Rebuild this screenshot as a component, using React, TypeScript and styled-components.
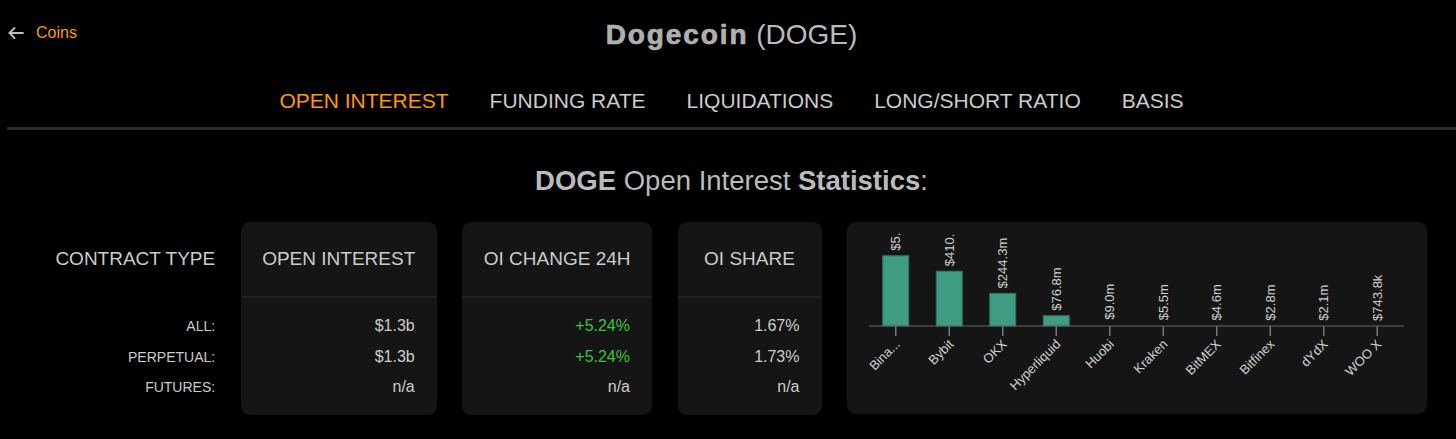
import React from 'react';
import styled, { createGlobalStyle } from 'styled-components';

const GlobalStyle = createGlobalStyle`
	html, body {
		margin: 0;
		padding: 0;
		background: #000;
	}
	body {
		font-family: "Liberation Sans", Arial, sans-serif;
		color: #cccccc;
	}
`;

const tabs = ["OPEN INTEREST", "FUNDING RATE", "LIQUIDATIONS", "LONG/SHORT RATIO", "BASIS"];

const rowLabels = ["ALL:", "PERPETUAL:", "FUTURES:"];

const columns = [
	{ title: "OPEN INTEREST", values: ["$1.3b", "$1.3b", "n/a"], green: [false, false, false] },
	{ title: "OI CHANGE 24H", values: ["+5.24%", "+5.24%", "n/a"], green: [true, true, false] },
	{ title: "OI SHARE", values: ["1.67%", "1.73%", "n/a"], green: [false, false, false] },
];

const exchanges = [
	{ name: "Bina...", value: 526.2, label: "$5." },
	{ name: "Bybit", value: 410.5, label: "$410." },
	{ name: "OKX", value: 244.3, label: "$244.3m" },
	{ name: "Hyperliquid", value: 76.8, label: "$76.8m" },
	{ name: "Huobi", value: 9.0, label: "$9.0m" },
	{ name: "Kraken", value: 5.5, label: "$5.5m" },
	{ name: "BitMEX", value: 4.6, label: "$4.6m" },
	{ name: "Bitfinex", value: 2.8, label: "$2.8m" },
	{ name: "dYdX", value: 2.1, label: "$2.1m" },
	{ name: "WOO X", value: 0.7438, label: "$743.8k" },
];

const CHART_W = 580;
const CHART_H = 192;
const AXIS_Y = 104;
const AXIS_X0 = 22;
const SLOT = 53.5;
const BAR_W = 26;
const SCALE = 0.1335;

const BackArrow = () => (
	<svg width="16" height="12" viewBox="0 0 16 12" fill="none" stroke="#bdbdbd" strokeWidth="1.8" strokeLinecap="round" strokeLinejoin="round">
		<path d="M15 6H1.5" />
		<path d="M6.5 1L1.5 6l5 5" />
	</svg>
);

const ExchangeChart = () => (
	<svg width={CHART_W} height={CHART_H} viewBox={`0 0 ${CHART_W} ${CHART_H}`}>
		<defs>
			<clipPath id="plot">
				<rect x="22" y="11" width={CHART_W - 22} height={CHART_H - 11} />
			</clipPath>
		</defs>
		<g clipPath="url(#plot)">
			{exchanges.map((ex, i) => {
				const cx = AXIS_X0 + SLOT * (i + 0.5);
				const h = ex.value * SCALE;
				const top = AXIS_Y - h;
				return (
					<g key={ex.name}>
						{h > 2 && (
							<rect x={cx - BAR_W / 2} y={top} width={BAR_W} height={h} fill="#3f9b82" stroke="#2c7663" strokeWidth="1" />
						)}
						<text
							x={cx}
							y={top - 5}
							transform={`rotate(-90 ${cx} ${top - 5})`}
							fill="#cfcfcf"
							fontSize="13"
							dominantBaseline="central"
							fontFamily='"Liberation Sans", Arial, sans-serif'
						>
							{ex.label}
						</text>
						<line x1={cx} y1={AXIS_Y} x2={cx} y2={AXIS_Y + 10} stroke="#777" strokeWidth="1.5" />
						<text
							x={cx + 5}
							y={AXIS_Y + 19}
							transform={`rotate(-45 ${cx + 5} ${AXIS_Y + 19})`}
							fill="#cfcfcf"
							fontSize="13"
							textAnchor="end"
							fontFamily='"Liberation Sans", Arial, sans-serif'
						>
							{ex.name}
						</text>
					</g>
				);
			})}
			<line x1={AXIS_X0} y1={AXIS_Y} x2={AXIS_X0 + SLOT * exchanges.length} y2={AXIS_Y} stroke="#666" strokeWidth="1.2" />
		</g>
	</svg>
);

const App = () => {
	return (
		<Page>
			<GlobalStyle />
			<TopBar>
				<BackLink href="#">
					<BackArrow />
					<span>Coins</span>
				</BackLink>
				<Title>
					<strong>Dogecoin</strong> (DOGE)
				</Title>
				<div />
			</TopBar>
			<Tabs>
				{tabs.map((t, i) => (
					<Tab key={t} $active={i === 0}>{t}</Tab>
				))}
			</Tabs>
			<Heading>
				<b>DOGE</b> Open Interest <b>Statistics</b>:
			</Heading>
			<StatsRow>
				<LabelColumn>
					<CardHeader>CONTRACT TYPE</CardHeader>
					<Divider $hidden />
					<Rows>
						{rowLabels.map((l) => (
							<RowLabel key={l}>{l}</RowLabel>
						))}
					</Rows>
				</LabelColumn>
				{columns.map((c) => (
					<Card key={c.title}>
						<CardHeader>{c.title}</CardHeader>
						<Divider />
						<Rows>
							{c.values.map((v, i) => (
								<Value key={i} $green={c.green[i]}>{v}</Value>
							))}
						</Rows>
					</Card>
				))}
				<ChartCard>
					<ExchangeChart />
				</ChartCard>
			</StatsRow>
		</Page>
	);
};

const Page = styled.div`
	padding-left: 7px;
	min-height: 439px;
	box-sizing: border-box;
`;

const TopBar = styled.div`
	display: grid;
	grid-template-columns: 1fr auto 1fr;
	align-items: start;
	padding-top: 19px;
	height: 54px;
	box-sizing: border-box;
`;

const BackLink = styled.a`
	display: flex;
	align-items: center;
	gap: 12px;
	margin-top: 5px;
	padding-left: 1px;
	color: #ff9900;
	text-decoration: none;
	font-size: 16px;
	line-height: 18px;
	justify-self: start;
`;

const Title = styled.h1`
	margin: 0;
	font-size: 28px;
	line-height: 32px;
	font-weight: normal;
	color: #bbbbbb;
	white-space: nowrap;

	strong {
		font-weight: 700;
		letter-spacing: 1.9px;
		-webkit-text-stroke: 0.7px #b0b0b0;
		color: #b0b0b0;
	}
`;

const Tabs = styled.nav`
	display: flex;
	justify-content: center;
	gap: 41px;
	margin-top: 35px;
	padding-bottom: 14px;
	border-bottom: 3px solid #2a2a2a;
`;

const Tab = styled.a<{ $active?: boolean }>`
	font-size: 21px;
	line-height: 24px;
	color: ${(p) => (p.$active ? "#ff9900" : "#cccccc")};
	cursor: pointer;
`;

const Heading = styled.h2`
	margin: 35px 0 0;
	text-align: center;
	font-size: 27.5px;
	line-height: 32px;
	font-weight: normal;
	color: #bbbbbb;

	b {
		font-weight: 700;
	}
`;

const StatsRow = styled.div`
	display: flex;
	justify-content: flex-end;
	align-items: stretch;
	gap: 25.5px;
	margin-top: 25px;
	padding-right: 29px;
`;

const LabelColumn = styled.div`
	display: flex;
	flex-direction: column;
	align-items: flex-end;
	text-align: right;
`;

const Card = styled.div`
	display: flex;
	flex-direction: column;
	min-width: 144px;
	background: #151515;
	border-radius: 9px;
	box-sizing: border-box;
`;

const CardHeader = styled.div`
	height: 74px;
	display: flex;
	align-items: center;
	justify-content: center;
	padding: 0 21.5px;
	font-size: 19px;
	color: #cccccc;
	white-space: nowrap;

	${LabelColumn} & {
		padding: 0;
	}
`;

const Divider = styled.div<{ $hidden?: boolean }>`
	height: 2px;
	width: 100%;
	background: ${(p) => (p.$hidden ? "transparent" : "#212121")};
`;

const Rows = styled.div`
	display: flex;
	flex-direction: column;
	padding: 13px 22px 12px;

	${LabelColumn} & {
		padding: 13px 0 12px;
	}
`;

const RowLabel = styled.div`
	height: 30.5px;
	line-height: 30.5px;
	font-size: 14px;
	color: #cccccc;
`;

const Value = styled.div<{ $green?: boolean }>`
	height: 30.5px;
	line-height: 30.5px;
	font-size: 16px;
	text-align: right;
	color: ${(p) => (p.$green ? "#3ac43a" : "#cccccc")};
`;

const ChartCard = styled.div`
	width: 580px;
	height: 192px;
	background: #151515;
	border-radius: 9px;
	overflow: hidden;

	svg {
		display: block;
	}
`;

export default App;
